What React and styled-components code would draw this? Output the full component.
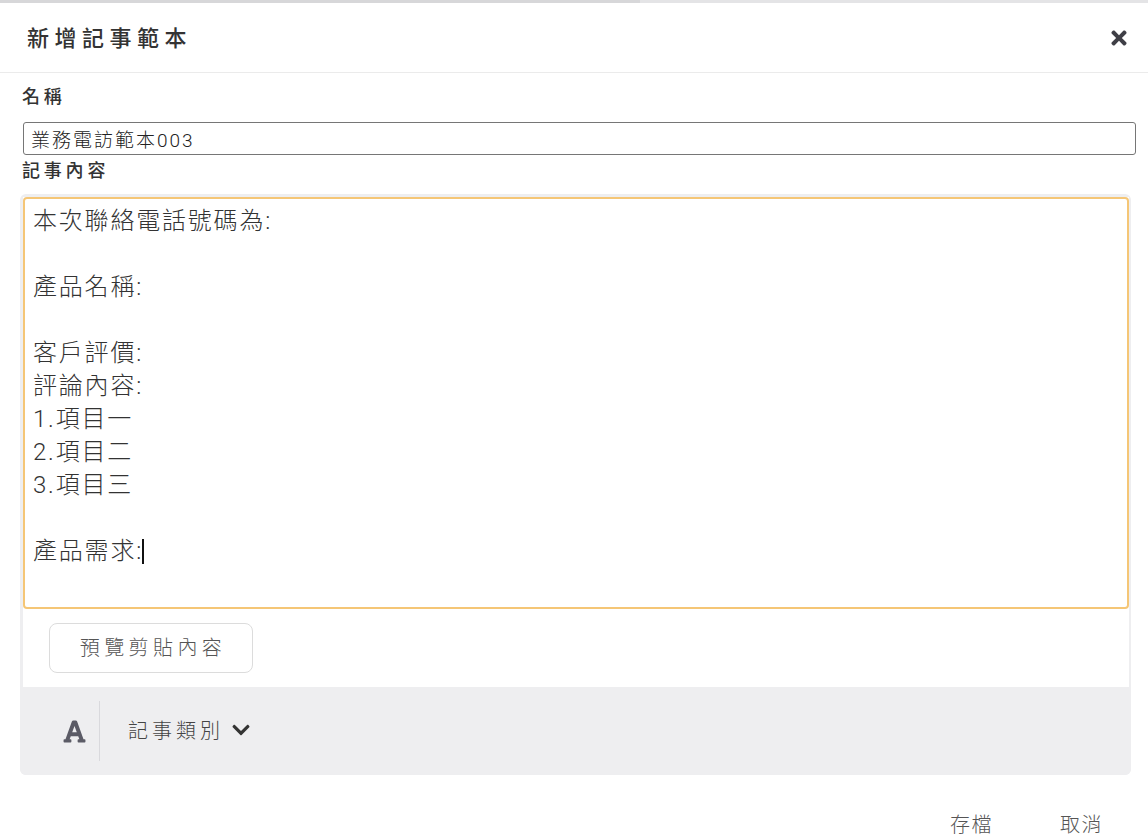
import React from "react";
import styled, { createGlobalStyle } from "styled-components";
import { FaFont, FaChevronDown, FaTimes } from "react-icons/fa";

const Global = createGlobalStyle`
  html, body { margin: 0; padding: 0; background: #fff; }
  body {
    font-family: "Roboto", "Noto Sans CJK TC", "Noto Sans", sans-serif;
    color: #333;
    overflow: hidden;
  }
  * { box-sizing: border-box; }
`;

const Page = styled.div`
  width: 1148px;
  height: 839px;
  display: flex;
  flex-direction: column;
  background: #fff;
`;

const TopStrip = styled.div`
  height: 3px;
  display: flex;
`;

const StripPart = styled.div`
  flex: ${(p) => p.$grow};
  background: ${(p) => p.$bg};
`;

const Header = styled.header`
  height: 70px;
  display: flex;
  align-items: center;
  justify-content: space-between;
  padding: 0 18px 0 27px;
  border-bottom: 1px solid #ebebeb;
`;

const Title = styled.h1`
  margin: 0;
  font-size: 22px;
  font-weight: 500;
  letter-spacing: 5.5px;
  color: #333;
  line-height: 1;
  padding-top: 2px;
`;

const CloseButton = styled.button`
  border: 0;
  background: none;
  padding: 0;
  color: #3f3f46;
  display: flex;
  align-items: center;
  cursor: pointer;
`;

const Form = styled.div`
  padding: 12px 12px 0 20px;
  display: flex;
  flex-direction: column;
`;

const Label = styled.label`
  margin-left: 2px;
  font-size: 18px;
  font-weight: 500;
  letter-spacing: 3.8px;
  line-height: 24px;
  color: #333;
  margin-top: ${(p) => p.$top || 0}px;
`;

const TextInput = styled.div`
  margin: 13px 0 0 3px;
  height: 33px;
  border: 1px solid #767676;
  border-radius: 3px;
  padding: 0 7px;
  display: flex;
  align-items: center;
  font-size: 19px;
  letter-spacing: 2px;
  font-weight: 300;
  color: #222;
`;

const EditorWrap = styled.div`
  margin: 11px 5px 0 0;
  background: #eeeef0;
  border-radius: 6px;
  padding: 3px 3px 0 3px;
  display: flex;
  flex-direction: column;
`;

const EditorBody = styled.div`
  background: #fff;
  margin-right: -1px;
`;

const TextArea = styled.div`
  height: 412px;
  border: 2px solid #f5c676;
  border-radius: 4px;
  padding: 6px 8px;
  font-size: 24px;
  letter-spacing: 1.8px;
  line-height: 33px;
  font-weight: 300;
  color: #333;
  white-space: pre-wrap;
`;

const Caret = styled.span`
  display: inline-block;
  width: 2px;
  height: 25px;
  background: #111;
  vertical-align: -5px;
  margin-left: -1px;
`;

const ButtonRow = styled.div`
  padding: 14px 26px;
  display: flex;
`;

const OutlineButton = styled.button`
  height: 50px;
  width: 204px;
  border: 1px solid #dcdcdc;
  border-radius: 8px;
  background: #fff;
  font-family: inherit;
  font-size: 20px;
  font-weight: 300;
  letter-spacing: 4.4px;
  color: #555;
  padding: 0 0 4px 4px;
`;

const Toolbar = styled.div`
  height: 88px;
  margin: 0 -3px;
  background: #eeeef0;
  border-radius: 0 0 6px 6px;
  display: flex;
  align-items: center;
  padding-left: 42px;
`;

const IconBox = styled.div`
  width: 37px;
  display: flex;
  align-items: center;
  color: #5b5b66;
`;

const VDivider = styled.div`
  width: 1px;
  height: 60px;
  background: #d9d9dd;
`;

const Dropdown = styled.div`
  margin-left: 28px;
  display: flex;
  align-items: center;
  gap: 7px;
  font-size: 20px;
  font-weight: 300;
  letter-spacing: 4px;
  color: #444;
  margin-top: -4px;
`;

const Chevron = styled.span`
  display: flex;
  color: #333;
  margin-top: 2px;
`;

const Footer = styled.div`
  display: flex;
  justify-content: flex-end;
  gap: 67px;
  padding: 38px 33px 0 0;
`;

const TextButton = styled.button`
  border: 0;
  background: none;
  padding: 0;
  font-family: inherit;
  font-size: 20px;
  font-weight: 300;
  letter-spacing: 1.5px;
  color: #555;
  line-height: 24px;
`;

const content = `本次聯絡電話號碼為:

產品名稱:

客戶評價:
評論內容:
1.項目一
2.項目二
3.項目三

產品需求:`;

export default function App() {
  return (
    <Page>
      <Global />
      <TopStrip>
        <StripPart $grow={640} $bg="#d7d7d9" />
        <StripPart $grow={508} $bg="#e4e4e6" />
      </TopStrip>
      <Header>
        <Title>新增記事範本</Title>
        <CloseButton aria-label="close">
          <FaTimes size={22} />
        </CloseButton>
      </Header>
      <Form>
        <Label>名稱</Label>
        <TextInput>業務電訪範本003</TextInput>
        <Label $top={4}>記事內容</Label>
        <EditorWrap>
          <EditorBody>
            <TextArea>
              {content}
              <Caret />
            </TextArea>
            <ButtonRow>
              <OutlineButton>預覽剪貼內容</OutlineButton>
            </ButtonRow>
          </EditorBody>
          <Toolbar>
            <IconBox>
              <FaFont size={25} />
            </IconBox>
            <VDivider />
            <Dropdown>
              記事類別
              <Chevron>
                <FaChevronDown size={20} />
              </Chevron>
            </Dropdown>
          </Toolbar>
        </EditorWrap>
        <Footer>
          <TextButton>存檔</TextButton>
          <TextButton>取消</TextButton>
        </Footer>
      </Form>
    </Page>
  );
}
